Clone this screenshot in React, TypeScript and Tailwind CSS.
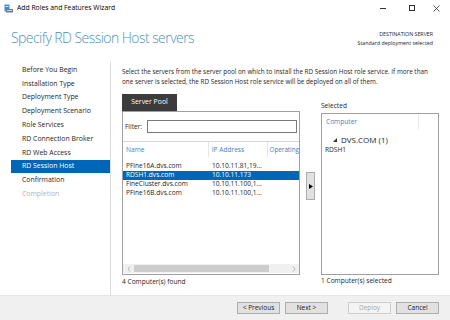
import React from "react";

const font = { fontFamily: "'Open Sans', 'Noto Sans', sans-serif" };

const navItems = [
  "Before You Begin",
  "Installation Type",
  "Deployment Type",
  "Deployment Scenario",
  "Role Services",
  "RD Connection Broker",
  "RD Web Access",
  "RD Session Host",
  "Confirmation",
  "Completion",
];

const rows = [
  ["PFine16A.dvs.com", "10.10.11.81,19..."],
  ["RDSH1.dvs.com", "10.10.11.173"],
  ["FineCluster.dvs.com", "10.10.11.100,1..."],
  ["PFine16B.dvs.com", "10.10.11.100,1..."],
];

function Btn({ label, disabled }: { label: string; disabled?: boolean }) {
  return (
    <div
      className={
        "w-[43px] h-[12px] flex items-center justify-center text-[6.5px] border " +
        (disabled
          ? "border-[#cfcfcf] bg-[#f4f4f4] text-[#a8a8a8]"
          : "border-[#adadad] bg-[#e1e1e1] text-[#222]")
      }
    >
      {label}
    </div>
  );
}

export default function App() {
  return (
    <div
      className="w-[450px] h-[320px] bg-white flex flex-col text-[#1e1e1e] overflow-hidden"
      style={font}
    >
      {/* title bar */}
      <div className="h-[16px] flex items-center relative shrink-0">
        <svg className="ml-[4px]" width="9" height="9" viewBox="0 0 9 9">
          <rect x="0.5" y="0.5" width="5" height="7" fill="#3b8fd6" />
          <rect x="1.5" y="2" width="3" height="1" fill="#cfe6fb" />
          <rect x="2" y="5" width="7" height="3.5" fill="#6c7a89" />
          <rect x="3" y="6" width="5" height="1" fill="#c8d2dc" />
        </svg>
        <span className="ml-[4px] text-[6.8px] text-black">Add Roles and Features Wizard</span>
        <div className="absolute right-0 top-0 h-[16px] flex items-center">
          <div className="w-[29px] flex justify-center">
            <div className="w-[6px] h-[0.8px] bg-[#333]" />
          </div>
          <div className="w-[29px] flex justify-center">
            <div className="w-[6px] h-[6px] border border-[#333]" />
          </div>
          <div className="w-[24px] flex justify-center pr-[4px]">
            <svg width="7" height="7" viewBox="0 0 7 7">
              <path d="M0.5 0.5 L6.5 6.5 M6.5 0.5 L0.5 6.5" stroke="#333" strokeWidth="0.8" />
            </svg>
          </div>
        </div>
      </div>

      {/* header */}
      <div className="h-[46px] flex items-start justify-between shrink-0">
        <div className="ml-[11px] mt-[12px] text-[14px] font-light leading-[20px] text-[#4b93b9] tracking-[-0.55px]">
          Specify RD Session Host servers
        </div>
        <div className="mt-[14px] mr-[17px] text-right text-[5.3px] leading-[8.5px] text-[#222]">
          <div>DESTINATION SERVER</div>
          <div>Standard deployment selected</div>
        </div>
      </div>

      {/* main */}
      <div className="flex-1 flex min-h-0">
        <div className="w-[111px] border-r border-[#dcdcdc] pt-[1px] pl-[11px] shrink-0">
          {navItems.map((n) => (
            <div
              key={n}
              className={
                "h-[13.8px] flex items-center pl-[11px] text-[6.9px] " +
                (n === "RD Session Host"
                  ? "bg-[#0067b8] text-white"
                  : n === "Completion"
                  ? "text-[#b4b4b4]"
                  : "text-[#1e1e1e]")
              }
            >
              {n}
            </div>
          ))}
        </div>

        <div className="flex-1 pl-[11px] pt-[5px] flex flex-col">
          <div className="text-[6.35px] leading-[10px] text-[#1e1e1e] w-[318px]">
            Select the servers from the server pool on which to install the RD Session Host role service. If more than
            one server is selected, the RD Session Host role service will be deployed on all of them.
          </div>

          <div className="flex mt-[7px]">
            {/* server pool */}
            <div className="flex flex-col w-[178px]">
              <div className="w-[55px] h-[17px] bg-[#3c3c3c] text-white text-[6.9px] flex items-center justify-center">
                Server Pool
              </div>
              <div className="h-[164px] border border-[#a0a0a0] flex flex-col">
                <div className="h-[30px] border-b border-[#d5d5d5] flex items-center px-[1px]">
                  <span className="text-[6.5px] ml-[1px] w-[22px]">Filter:</span>
                  <div className="flex-1 h-[13px] border border-[#7a7a7a] mr-[1px] bg-white" />
                </div>
                <div className="h-[15px] flex text-[6.6px] text-[#3f7fbf]">
                  <div className="w-[86px] pl-[3px] flex items-center border-r border-[#e5e5e5]">Name</div>
                  <div className="w-[59px] pl-[3px] flex items-center border-r border-[#e5e5e5]">IP Address</div>
                  <div className="flex-1 pl-[2px] flex items-center whitespace-nowrap text-[6.3px]">Operating</div>
                </div>
                <div className="pt-[4.5px] flex-1">
                  {rows.map((r, i) => (
                    <div
                      key={r[0]}
                      className={
                        "h-[9px] flex items-center text-[6.6px] " +
                        (i === 1 ? "bg-[#0067b8] text-white" : "text-[#1e1e1e]")
                      }
                    >
                      <div className="w-[86px] pl-[3px] whitespace-nowrap">{r[0]}</div>
                      <div className="w-[59px] pl-[3px] whitespace-nowrap">{r[1]}</div>
                    </div>
                  ))}
                </div>
                <div className="h-[9px] mb-[1px] flex items-center bg-[#f0f0f0] text-[#a0a0a0]">
                  <div className="w-[11px] flex justify-center">
                    <svg width="4" height="6" viewBox="0 0 4 6">
                      <path d="M3 0.5 L1 3 L3 5.5" fill="none" stroke="#a0a0a0" strokeWidth="0.7" />
                    </svg>
                  </div>
                  <div className="w-[135px] h-[7px] bg-[#cdcdcd]" />
                  <div className="flex-1" />
                  <div className="w-[11px] flex justify-center">
                    <svg width="4" height="6" viewBox="0 0 4 6">
                      <path d="M1 0.5 L3 3 L1 5.5" fill="none" stroke="#a0a0a0" strokeWidth="0.7" />
                    </svg>
                  </div>
                </div>
              </div>
              <div className="text-[6.6px] mt-[2px] leading-[9px]">4 Computer(s) found</div>
            </div>

            {/* arrow */}
            <div className="w-[21px] flex justify-center pt-[78px]">
              <div className="w-[9px] h-[28px] bg-[#e1e1e1] border border-[#adadad] flex items-center justify-center">
                <svg width="4" height="5" viewBox="0 0 4 5">
                  <path d="M0 0 L4 2.5 L0 5 Z" fill="#000" />
                </svg>
              </div>
            </div>

            {/* selected */}
            <div className="flex flex-col w-[118px]">
              <div className="h-[17px] flex items-end pb-[0px] text-[6.6px]">Selected</div>
              <div className="h-[162px] border border-[#a0a0a0] flex flex-col mt-[2px]">
                <div className="h-[15px] flex text-[6.6px] text-[#3f7fbf]">
                  <div className="w-[97px] pl-[4px] flex items-center border-r border-[#e8e8e8]">Computer</div>
                </div>
                <div className="mt-[6px] flex items-center h-[10px] pl-[11px] text-[8px]">
                  <svg width="4" height="4" viewBox="0 0 4 4" className="mr-[4px]">
                    <path d="M4 0 L4 4 L0 4 Z" fill="#333" />
                  </svg>
                  DVS.COM (1)
                </div>
                <div className="h-[9px] flex items-center pl-[3px] text-[6.6px]">RDSH1</div>
              </div>
              <div className="text-[6.6px] mt-[1px] leading-[9px]">1 Computer(s) selected</div>
            </div>
          </div>
        </div>
      </div>

      {/* bottom bar */}
      <div className="h-[25px] bg-[#f0f0f0] border-t border-[#e4e4e4] flex items-center justify-end pr-[11px] shrink-0">
        <div className="flex gap-[5px]">
          <Btn label="< Previous" />
          <Btn label="Next >" />
        </div>
        <div className="flex gap-[5px] ml-[20px]">
          <Btn label="Deploy" disabled />
          <Btn label="Cancel" />
        </div>
      </div>
    </div>
  );
}
